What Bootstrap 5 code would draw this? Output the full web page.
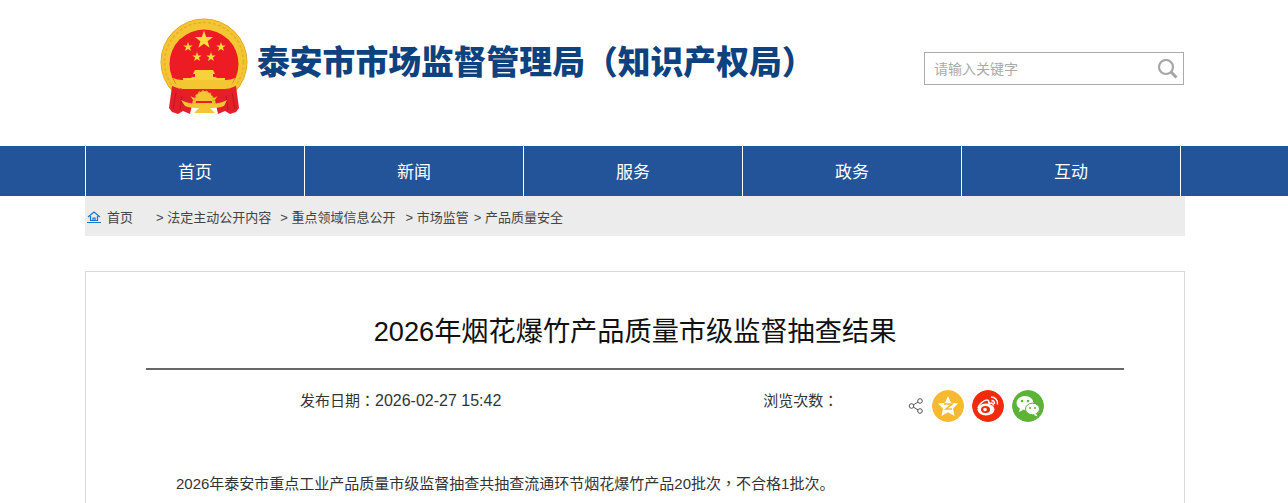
<!doctype html>
<html lang="zh-CN">
<head>
  <meta charset="utf-8">
  <meta name="viewport" content="width=device-width, initial-scale=1">
  <title>2026年烟花爆竹产品质量市级监督抽查结果</title>
  <link href="https://cdn.jsdelivr.net/npm/bootstrap@5.3.3/dist/css/bootstrap.min.css" rel="stylesheet">
  <style>
    body { font-family: "Liberation Sans", "Noto Sans CJK SC", sans-serif; color: #333; overflow: hidden; height: 503px; }
    .site-wrap { width: 1100px; margin-left: 85px; }
    .site-head { height: 146px; padding: 18px 0 0 74px; }
    .site-emblem { width: 94px; height: 98px; flex: none; }
    .site-name { font-size: 32.8px; line-height: 40px; font-weight: 900; color: #0e427f; margin: 25px 0 0 4px; white-space: nowrap; width: 570px; flex: none; }
    .search-box { width: 260px; height: 33px; border: 1px solid #aaa; margin: 34px 1px 0 auto; padding: 0 5px 0 10px; }
    .search-box input { border: 0; outline: 0; font-size: 14px; width: 200px; padding: 2px 0 0; margin-left: -1px; color: #333; }
    .search-box input::placeholder { color: #aaa; }
    .main-nav { background: #235399; height: 50px; }
    .main-nav a { width: 219px; height: 50px; line-height: 53px; text-align: center; color: #fff; font-size: 17px; text-decoration: none; border-left: 1px solid #fff; }
    .main-nav a:last-child { width: 220px; border-right: 1px solid #fff; }
    .crumbs { background: #ececec; height: 40px; padding-top: 3px; font-size: 13px; color: #444; white-space: nowrap; }
    .crumbs a { color: #444; text-decoration: none; }
    .crumbs svg { margin: -1px 6px 0 2px; }
    .crumb-one { margin-left: 23px; }
    .crumb-two { margin-left: 9px; }
    .crumb-three { margin-left: 10px; }
    .crumb-four { margin-left: 5px; }
    .article-box { margin-top: 35px; height: 232px; border: 1px solid #d9d9d9; border-bottom: 0; padding: 0 60px; }
    .article-title { font-size: 27.2px; line-height: 40px; font-weight: 400; color: #111; text-align: center; margin: 40px 0 0; padding-bottom: 16px; border-bottom: 2px solid #666; }
    .article-meta { font-size: 15px; font-family: "Liberation Sans", "Noto Sans CJK TC", sans-serif; color: #333; height: 62px; }
    .meta-date { margin-left: 154px; margin-top: 19px; }
    .meta-date b { font-size: 16px; font-weight: 400; }
    .meta-views { margin-left: 262px; margin-top: 20px; }
    .share-links { margin-left: 70px; margin-top: 20px; height: 32px; gap: 8px; }
    .share-dot { width: 32px; height: 32px; border-radius: 50%; display: block; }
    .article-text { font-size: 15px; line-height: 26px; color: #333; margin: 39px 0 0 30px; white-space: nowrap; }
    .mid-comma { font-family: "Liberation Sans", "Noto Sans CJK TC", sans-serif; }
  </style>
</head>
<body>
  <div class="site-wrap">
    <div class="site-head d-flex">
      <svg class="site-emblem" viewBox="0 0 94 98">
        <defs>
          <polygon id="star5" points="0,-10 2.350,-3.240 9.510,-3.090 3.800,1.240 5.880,8.090 0,4 -5.880,8.090 -3.800,1.240 -9.510,-3.090 -2.350,-3.240"/>
        </defs>
        <!-- ring -->
        <circle cx="45" cy="44" r="43" fill="#f5c634" stroke="#e0a91f" stroke-width="1"/>
        <circle cx="45" cy="44" r="39.500" fill="none" stroke="#e5b027" stroke-width="1.500" stroke-dasharray="3 2"/>
        <circle cx="45" cy="46" r="34.500" fill="#ed1c24"/>
        <!-- stars -->
        <g fill="#fbdc3f">
          <use href="#star5" transform="translate(45 22) scale(.95)"/>
          <use href="#star5" transform="translate(29 29) scale(.5)"/>
          <use href="#star5" transform="translate(62 29) scale(.5)"/>
          <use href="#star5" transform="translate(38 39) scale(.5)"/>
          <use href="#star5" transform="translate(52 39) scale(.5)"/>
        </g>
        <!-- gate -->
        <path fill="#f8d13b" d="M36 52h18l2 4h-2v3h3l2 3H31l2-3h3v-3h-2zM24 60h42v3H24z"/>
        <!-- red ribbons over the ring foot -->
        <path fill="#e3202a" d="M13 68l16 6 5 8 -3 14 -7 -3 -5 3 -6 -2 -3 -4z"/>
        <path fill="#e3202a" d="M77 68l-16 6 -5 8 3 14 7 -3 5 3 6 -2 3 -4z"/>
        <path fill="none" stroke="#b3141c" stroke-width=".8" d="M17 75l-3 16M23 78l-2 14M67 78l2 14M73 75l3 16"/>
        <!-- band under the gate -->
        <path fill="#f5c634" d="M14 60c3 1 6 2 9 2h44c3 0 6-1 9-2l-4 8c-2 3-5 3-8 3H26c-3 0-6 0-8-3z"/>
        <path fill="#ed1c24" d="M25 71h40c-3 6-8 10-20 10s-17-4-20-10z"/>
        <!-- gear and cloth -->
        <circle cx="45" cy="82" r="9" fill="#f5c634"/>
        <circle cx="45" cy="82" r="9" fill="none" stroke="#e5b027" stroke-width="1.500" stroke-dasharray="2 2"/>
        <path fill="#ed1c24" d="M37 83h16v2H37z"/>
        <path fill="#f5c634" d="M22 82c7 4 15 4 23 4s16 0 23-4l-3 6c-5 2-10 2-14 2l5 5H35l5-5c-4 0-9 0-14-2z"/>
      </svg>
      <div class="site-name">泰安市市场监督管理局（知识产权局）</div>
      <div class="search-box d-flex align-items-center">
        <input type="text" placeholder="请输入关键字">
        <svg class="ms-auto" width="20" height="20" viewBox="0 0 20 20" fill="none" stroke="#a6a6a6">
          <circle cx="8" cy="8" r="7" stroke-width="2.200"/>
          <path d="M13 13l5.500 5.500" stroke-width="3"/>
        </svg>
      </div>
    </div>
  </div>

  <nav class="main-nav">
    <div class="site-wrap d-flex">
      <a href="#">首页</a>
      <a href="#">新闻</a>
      <a href="#">服务</a>
      <a href="#">政务</a>
      <a href="#">互动</a>
    </div>
  </nav>

  <div class="site-wrap">
    <div class="crumbs d-flex align-items-center">
      <svg width="14" height="12" viewBox="0 0 14 12" fill="none" stroke="#1477c9" stroke-width="1.200">
        <path d="M1 6l6-5 6 5M3.500 5v4.500h7V5M6 9.500V7h2v2.500M0 11.500h14"/>
      </svg>
      <a href="#">首页</a>
      <a href="#" class="crumb-one">&gt; 法定主动公开内容</a>
      <a href="#" class="crumb-two">&gt; 重点领域信息公开</a>
      <a href="#" class="crumb-three">&gt; 市场监管</a>
      <a href="#" class="crumb-four">&gt; 产品质量安全</a>
    </div>

    <div class="article-box">
      <h1 class="article-title">2026年烟花爆竹产品质量市级监督抽查结果</h1>
      <div class="article-meta d-flex align-items-start">
        <div class="meta-date" lang="zh-TW">发布日期：<b>2026-02-27 15:42</b></div>
        <div class="meta-views" lang="zh-TW">浏览次数：</div>
        <div class="share-links d-flex align-items-center">
          <svg width="16" height="16" viewBox="0 0 16 16" fill="none" stroke="#555">
            <circle cx="3.500" cy="8" r="2.300"/><circle cx="12" cy="3" r="2.300"/><circle cx="12" cy="13" r="2.300"/>
            <path d="M5.500 6.800l4.500-2.700M5.500 9.200l4.500 2.700"/>
          </svg>
          <svg class="share-dot" viewBox="0 0 32 32">
            <circle cx="16" cy="16" r="16" fill="#f8b932"/>
            <polygon fill="#fff" points="16,6 19,12.800 26,13.500 21,18.500 22.500,26 16,22.300 9.500,26 11,18.500 6,13.500 13,12.800"/>
            <path d="M12 14h8l-6 5h6" fill="none" stroke="#f8b932" stroke-width="1.600"/>
          </svg>
          <svg class="share-dot" viewBox="0 0 32 32">
            <circle cx="16" cy="16" r="16" fill="#f42a0c"/>
            <ellipse cx="14" cy="19.500" rx="8.500" ry="6" fill="#fff"/>
            <path d="M6 18c1-4 6-8 9-8 2 0 2 2 1.500 3.500M16.500 13.500c3-1 5-.5 5 2" fill="none" stroke="#fff" stroke-width="1.600"/>
            <ellipse cx="13.500" cy="19.500" rx="4.500" ry="3.500" fill="#f42a0c"/>
            <circle cx="13" cy="19.500" r="1.800" fill="#fff"/>
            <path d="M19 7c4 0 7 3 6.500 7.500M19.500 10.500c2 0 3 1.500 3 3.500" fill="none" stroke="#fff" stroke-width="1.500"/>
          </svg>
          <svg class="share-dot" viewBox="0 0 32 32">
            <circle cx="16" cy="16" r="16" fill="#5cb338"/>
            <ellipse cx="13" cy="13" rx="8.500" ry="7" fill="#fff"/>
            <path d="M8 18l-1 4 4-2z" fill="#fff"/>
            <circle cx="10" cy="11" r="1.300" fill="#5cb338"/><circle cx="16" cy="11" r="1.300" fill="#5cb338"/>
            <ellipse cx="20.500" cy="19" rx="7" ry="5.800" fill="#fff" stroke="#5cb338"/>
            <path d="M24 23.500l1.500 3-4-1.800z" fill="#fff"/>
            <circle cx="18" cy="18" r="1" fill="#5cb338"/><circle cx="23" cy="18" r="1" fill="#5cb338"/>
          </svg>
        </div>
      </div>
      <p class="article-text">2026年泰安市重点工业产品质量市级监督抽查共抽查流通环节烟花爆竹产品20批次<span class="mid-comma" lang="zh-TW">，</span>不合格1批次。</p>
    </div>
  </div>
  <script src="https://cdn.jsdelivr.net/npm/bootstrap@5.3.3/dist/js/bootstrap.bundle.min.js"></script>
</body>
</html>
